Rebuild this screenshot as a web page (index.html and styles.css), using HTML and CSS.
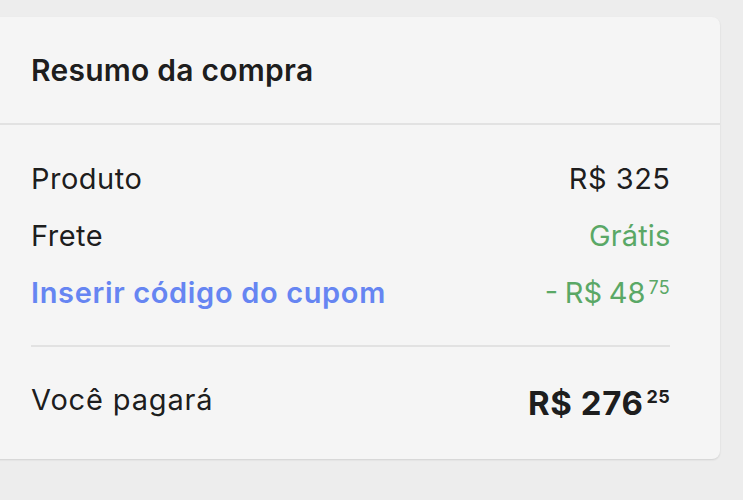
FILE: index.html
```html
<!DOCTYPE html>
<html lang="pt-BR">
<head>
<meta charset="utf-8">
<title>Resumo da compra</title>
<link rel="stylesheet" href="styles.css">
</head>
<body>
<section class="card">
  <header class="card-header">
    <h2 class="title">Resumo da compra</h2>
  </header>
  <div class="card-body">
    <div class="row">
      <span class="label">Produto</span>
      <span class="value">R$ 325</span>
    </div>
    <div class="row">
      <span class="label">Frete</span>
      <span class="value green free">Grátis</span>
    </div>
    <div class="row">
      <a class="label link" href="#">Inserir código do cupom</a>
      <span class="value green price discount">- R$ 48<sup class="cents">75</sup></span>
    </div>
    <hr class="divider">
    <div class="total-row">
      <span class="total-label">Você pagará</span>
      <span class="total-value price">R$ 276<sup class="cents-bold">25</sup></span>
    </div>
  </div>
</section>
</body>
</html>
```
FILE: styles.css
```css
* { box-sizing: border-box; }
html, body { margin: 0; padding: 0; }
body {
  background: #ededed;
  font-family: "Inter", "Noto Sans", sans-serif;
  color: rgba(0,0,0,.9);
  width: 743px;
  height: 500px;
  overflow: hidden;
  padding-top: 17px;
}
.card {
  margin-left: -12px;
  width: 732px;
  background: #f5f5f5;
  border-radius: 8px;
  box-shadow: 0 1px 2px rgba(0,0,0,.12);
}
.card-header {
  height: 108px;
  display: flex;
  align-items: center;
  padding-left: 43px;
  border-bottom: 2px solid #e2e2e2;
}
.title {
  margin: 0;
  font-size: 30px;
  font-weight: 600;
  letter-spacing: 0.25px;
}
.card-body {
  padding: 25px 50px 0 43px;
}
.row {
  height: 57px;
  display: flex;
  align-items: center;
  justify-content: space-between;
  font-size: 29px;
  letter-spacing: 0.5px;
}
.value { margin-right: -0.5px; }
.free { letter-spacing: 0.15px; }
.discount { letter-spacing: 0; word-spacing: -1.5px; margin-right: 0; }
.link {
  color: #6685f2;
  font-weight: 600;
  text-decoration: none;
  letter-spacing: 0.65px;
}
.green { color: #5aa866; }
.price {
  display: flex;
  align-items: flex-start;
}
.cents {
  font-size: 18px;
  line-height: 1;
  margin-left: 3px;
  margin-top: 4px;
  letter-spacing: 0.3px;
}
.divider {
  margin: 24px 0 0;
  border: 0;
  border-top: 2px solid #e2e2e2;
}
.total-row {
  height: 112px;
  display: flex;
  justify-content: space-between;
  align-items: center;
}
.total-label {
  font-size: 29px;
  letter-spacing: 0.85px;
  margin-bottom: 8px;
}
.total-value {
  font-size: 33px;
  font-weight: 700;
  letter-spacing: 0.6px;
}
.cents-bold {
  font-size: 18px;
  line-height: 1;
  margin-left: 3px;
  margin-top: 5px;
  letter-spacing: 0.3px;
}
```
